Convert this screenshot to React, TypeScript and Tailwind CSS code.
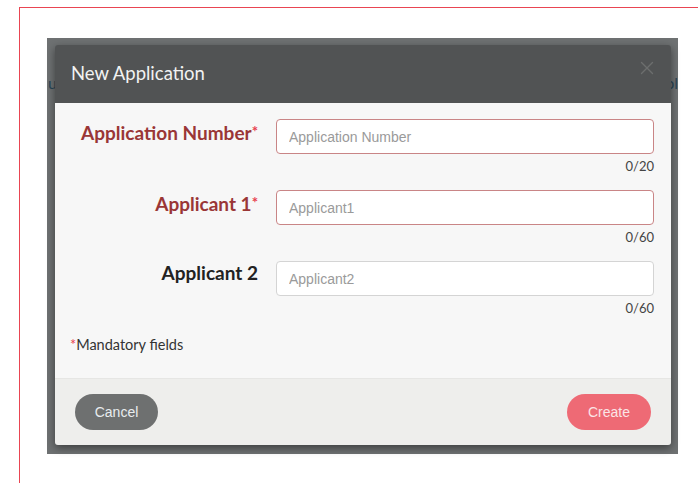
import { X } from 'lucide-react';

interface FieldProps {
  label: string;
  required?: boolean;
  placeholder: string;
  max: number;
}

function Field({ label, required, placeholder, max }: FieldProps) {
  return (
    <div className="flex">
      <label
        className={`w-[203px] shrink-0 text-right text-[19px] font-bold leading-[24px] ${
          required ? 'text-[#9a3636]' : 'text-[#222]'
        }`}
      >
        {label}
        {required && <span className="align-[3px] text-[15px] text-[#e8404f]">*</span>}
      </label>
      <div className="ml-[18px] flex-1">
        <input
          placeholder={placeholder}
          className={`block h-[35px] w-full rounded-[4px] border bg-white px-3 font-['Liberation_Sans',Arial,sans-serif] text-[14px] text-[#333] outline-none placeholder:text-[#9a9a9a] ${
            required ? 'border-[#c98586]' : 'border-[#d4d4d4]'
          }`}
        />
        <div className="h-[36px] pt-[4px] text-right text-[13px] leading-[16px] text-[#444]">0/{max}</div>
      </div>
    </div>
  );
}

export default function App() {
  return (
    <div className="min-h-[483px] overflow-hidden bg-white font-['Lato','Open_Sans',sans-serif]">
      {/* thin red frame around the page area */}
      <div className="ml-[19px] mt-[7px] h-[500px] w-[720px] bg-[#e94552] pl-px pt-px">
        <div className="h-full w-full bg-white pl-[27px] pt-[30px]">
          {/* dimmed page behind the dialog */}
          <div className="relative w-[631px] bg-[#6e7172] pb-[9px] pl-[8px] pr-[7px] pt-[7px]">
            <span className="absolute left-[1px] top-[33px] text-[16px] text-[#2a4656]">u</span>
            <span className="absolute right-0 top-[33px] text-[16px] text-[#2a4656]">ol</span>

            <div className="relative overflow-hidden rounded-[3px] shadow-[0_3px_8px_rgba(0,0,0,0.45)]">
              <div className="flex h-[58px] items-center justify-between bg-[#515354] pl-[16px] pr-[13px]">
                <h3 className="text-[18.5px] text-[#f2f2f2]">New Application</h3>
                <X className="-mt-[12px] h-[22px] w-[22px] text-[#6c6e6e]" strokeWidth={1.5} />
              </div>

              <div className="h-[275px] bg-[#f7f7f7] pr-[17px] pt-[16px]">
                <Field label="Application Number" required placeholder="Application Number" max={20} />
                <Field label="Applicant 1" required placeholder="Applicant1" max={60} />
                <Field label="Applicant 2" placeholder="Applicant2" max={60} />
                <p className="mt-[2px] pl-[15px] text-[14.5px] text-[#333]">
                  <span className="text-[#e8404f]">*</span>Mandatory fields
                </p>
              </div>

              <div className="flex h-[67px] items-start justify-between border-t border-[#e6e6e4] bg-[#eeeeec] px-[20px] pt-[15px]">
                <button className="h-[36px] w-[83px] rounded-full bg-[#6e7070] font-['Liberation_Sans',Arial,sans-serif] text-[14px] text-[#e8ecee]">
                  Cancel
                </button>
                <button className="h-[36px] w-[84px] rounded-full bg-[#ee6a75] font-['Liberation_Sans',Arial,sans-serif] text-[14px] text-[#fbe4e6]">
                  Create
                </button>
              </div>
            </div>
          </div>
        </div>
      </div>
    </div>
  );
}
